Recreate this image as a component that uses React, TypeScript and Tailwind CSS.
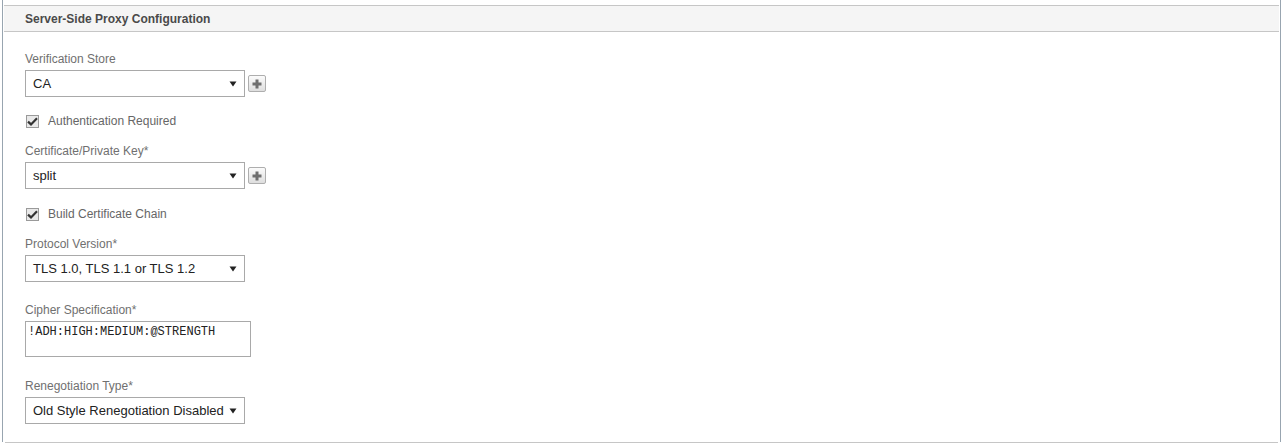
import type { ReactNode } from "react";

const SANS = "font-['Segoe_UI','Liberation_Sans',Arial,sans-serif]";

function Arrow() {
  return (
    <svg width="8" height="6" viewBox="0 0 8 6" className="shrink-0">
      <polygon points="0.5,0.5 7.5,0.5 4,5.5" fill="#222" />
    </svg>
  );
}

function PlusButton() {
  return (
    <button
      type="button"
      className="ml-[3px] flex h-[17px] w-[18px] items-center justify-center rounded-[2px] border border-[#aeaeae] bg-gradient-to-b from-[#fbfbfb] to-[#dedede]"
    >
      <svg width="10" height="10" viewBox="0 0 10 10">
        <rect x="3.5" y="0.5" width="3" height="9" fill="#6f6f6f" />
        <rect x="0.5" y="3.5" width="9" height="3" fill="#6f6f6f" />
      </svg>
    </button>
  );
}

function Select({ value, withAdd }: { value: string; withAdd?: boolean }) {
  return (
    <div className="mt-[3px] flex items-center">
      <div className="flex h-[27px] w-[220px] items-center justify-between border border-[#a9a9a9] bg-white pr-[7px] pl-[7px]">
        <span className="text-[13px] text-[#222]">{value}</span>
        <Arrow />
      </div>
      {withAdd && <PlusButton />}
    </div>
  );
}

function Field({
  label,
  className,
  children,
}: {
  label: string;
  className: string;
  children: ReactNode;
}) {
  return (
    <div className={className}>
      <div className="h-4 text-[12px] leading-4 text-[#707070]">{label}</div>
      {children}
    </div>
  );
}

function Check({ label, className }: { label: string; className: string }) {
  return (
    <div className={`flex h-4 items-center ${className}`}>
      <span className="ml-px flex h-[13px] w-[13px] items-center justify-center border border-[#9a9a9a] bg-[#e9e9e9]">
        <svg width="11" height="9" viewBox="0 0 11 9">
          <path
            d="M1 4.6 L4 7.4 L10 1.3"
            fill="none"
            stroke="#333"
            strokeWidth="2.2"
          />
        </svg>
      </span>
      <span className="ml-[9px] text-[12px] text-[#666]">{label}</span>
    </div>
  );
}

export default function App() {
  return (
    <div className={`h-[444px] w-[1282px] bg-white ${SANS}`}>
      <div className="ml-[2px] h-[442px] w-[1279px] border-x border-[#98a5b0] px-px pt-[5px]">
        <div className="flex h-[27px] items-center border-y border-[#c6c6c6] bg-[#f5f5f5] pl-[21px]">
          <span className="text-[12px] font-bold text-[#4a4a4a]">
            Server-Side Proxy Configuration
          </span>
        </div>

        <div className="flex flex-col pl-[21px]">
          <Field label="Verification Store" className="mt-[19px]">
            <Select value="CA" withAdd />
          </Field>

          <Check label="Authentication Required" className="mt-[16px]" />

          <Field label="Certificate/Private Key*" className="mt-[14px]">
            <Select value="split" withAdd />
          </Field>

          <Check label="Build Certificate Chain" className="mt-[17px]" />

          <Field label="Protocol Version*" className="mt-[14px]">
            <Select value="TLS 1.0, TLS 1.1 or TLS 1.2" />
          </Field>

          <Field label="Cipher Specification*" className="mt-[20px]">
            <div className="mt-[3px] h-[36px] w-[226px] border border-[#a9a9a9] bg-white px-[2px] pt-[3px] font-['Liberation_Mono',monospace] text-[12px] leading-[14px] text-[#222]">
              !ADH:HIGH:MEDIUM:@STRENGTH
            </div>
          </Field>

          <Field label="Renegotiation Type*" className="mt-[21px]">
            <Select value="Old Style Renegotiation Disabled" />
          </Field>
        </div>
      </div>
      <div className="ml-[5px] h-px w-[1273px] bg-[#c6c6c6]" />
    </div>
  );
}
